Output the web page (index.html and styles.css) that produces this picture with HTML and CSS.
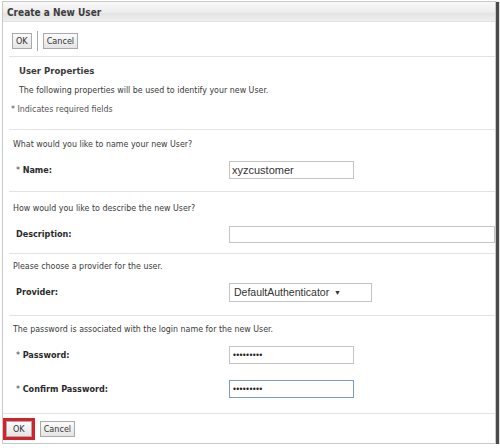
FILE: index.html
```html
<!DOCTYPE html>
<html>
<head>
<meta charset="utf-8">
<link rel="stylesheet" href="styles.css">
</head>
<body>
<div class="frame">
  <div class="header">Create a New User</div>
  <div class="toolbar">
    <button class="btn">OK</button>
    <span class="sep"></span>
    <button class="btn">Cancel</button>
  </div>
  <div class="intro">
    <div class="intro-title">User Properties</div>
    <div class="intro-text">The following properties will be used to identify your new User.</div>
    <div class="req-note">* Indicates required fields</div>
  </div>
  <div class="section s1">
    <div class="question">What would you like to name your new User?</div>
    <div class="field">
      <label class="label"><span class="star">* </span>Name:</label>
      <div class="input short">xyzcustomer</div>
    </div>
  </div>
  <div class="section s2">
    <div class="question">How would you like to describe the new User?</div>
    <div class="field">
      <label class="label nostar">Description:</label>
      <div class="input long"></div>
    </div>
  </div>
  <div class="section s3">
    <div class="question">Please choose a provider for the user.</div>
    <div class="field">
      <label class="label nostar">Provider:</label>
      <div class="select">DefaultAuthenticator <span class="arrow">▼</span></div>
    </div>
  </div>
  <div class="section s4">
    <div class="question">The password is associated with the login name for the new User.</div>
    <div class="field">
      <label class="label"><span class="star">* </span>Password:</label>
      <div class="input short pw">•••••••••</div>
    </div>
    <div class="field f2">
      <label class="label"><span class="star">* </span>Confirm Password:</label>
      <div class="input short pw focus">•••••••••</div>
    </div>
  </div>
  <div class="footer">
    <span class="ok-wrap"><button class="btn">OK</button></span>
    <button class="btn">Cancel</button>
  </div>
</div>
</body>
</html>
```
FILE: styles.css
```css
* { box-sizing: border-box; }
html, body { margin: 0; padding: 0; background: #fff; }
body {
  font-family: "DejaVu Sans Condensed", "DejaVu Sans", sans-serif;
  font-size: 8.8px;
  color: #3a3a3a;
}
.frame {
  margin: 1px 0 0 2px;
  width: 494px;
  height: 443px;
  border: 1px solid #c9c9c9;
  box-shadow: 2px 2px 1px 1px #4a4a4a;
  display: flex;
  flex-direction: column;
  overflow: hidden;
}
.header {
  height: 20px;
  line-height: 21px;
  padding-left: 4px;
  font-weight: bold;
  font-size: 10px;
  color: #3c3c3c;
  background: linear-gradient(#f9f9f9, #ececec 55%, #e3e3e3 60%, #efefef);
  border-bottom: 1px solid #e2e2e2;
}
.toolbar {
  height: 35px;
  display: flex;
  align-items: center;
  padding-top: 3px;
  gap: 5px;
  border-bottom: 1px solid #e3e3e3;
  margin-left: 6px;
  padding-left: 3px;
}
.btn {
  font-family: "DejaVu Sans Condensed", "DejaVu Sans", sans-serif;
  font-size: 9px;
  color: #333;
  height: 16px;
  padding: 0 3px;
  border: 1px solid #a9a9a9;
  background: linear-gradient(#fbfbfb, #e4e4e4);
  border-radius: 0;
  margin: 0;
}
.sep {
  width: 1px;
  height: 20px;
  background: #a8a8a8;
}
.intro {
  height: 72px;
  padding-left: 8px;
  display: flex;
  flex-direction: column;
}
.intro-title {
  font-weight: bold;
  font-size: 9.5px;
  margin-top: 6px;
  height: 16px;
  line-height: 16px;
  padding-left: 8px;
}
.intro-text {
  margin-top: 3px;
  height: 16px;
  line-height: 16px;
  padding-left: 8px;
}
.req-note {
  margin-top: 3px;
  height: 16px;
  line-height: 16px;
  color: #555;
}
.section {
  border-top: 1px solid #e3e3e3;
  margin-left: 6px;
  padding-left: 4px;
  display: flex;
  flex-direction: column;
}
.s1 { height: 62px; padding-top: 2px; }
.s2 { height: 62px; padding-top: 4px; }
.s3 { height: 62px; padding-top: 0; }
.s4 { height: 98px; padding-top: 1px; }
.question {
  height: 24px;
  line-height: 24px;
}
.field {
  height: 28px;
  display: flex;
  align-items: center;
}
.f2 { margin-top: 6px; }
.label {
  width: 216px;
  font-weight: bold;
  font-size: 9px;
  color: #2a2a2a;
  padding-left: 3px;
}
.star { font-weight: normal; color: #444; }
.input {
  height: 18px;
  border: 1px solid #c4c4c4;
  font-family: "Liberation Sans", Arial, sans-serif;
  font-size: 11px;
  line-height: 16px;
  padding-left: 2px;
  color: #333;
  background: #fff;
}
.short { width: 125px; }
.long { width: 266px; height: 17px; }
.pw { font-size: 8.5px; letter-spacing: 0.3px; padding-left: 3px; color: #222; }
.focus { border-color: #7d9bc0; }
.select {
  height: 19px;
  width: 143px;
  border: 1px solid #c4c4c4;
  font-family: "Liberation Sans", Arial, sans-serif;
  font-size: 10.5px;
  line-height: 17px;
  padding-left: 4px;
  color: #333;
}
.arrow { font-size: 7px; margin-left: 2px; vertical-align: 1px; }
.footer {
  border-top: 1px solid #e3e3e3;
  display: flex;
  align-items: center;
  gap: 5px;
  height: 30px;
  margin-left: 0;
  padding-left: 0;
}
.ok-wrap {
  border: 3px solid #d2232a;
  display: inline-flex;
}
.ok-wrap .btn { height: 16px; padding: 0 6px; }
```
